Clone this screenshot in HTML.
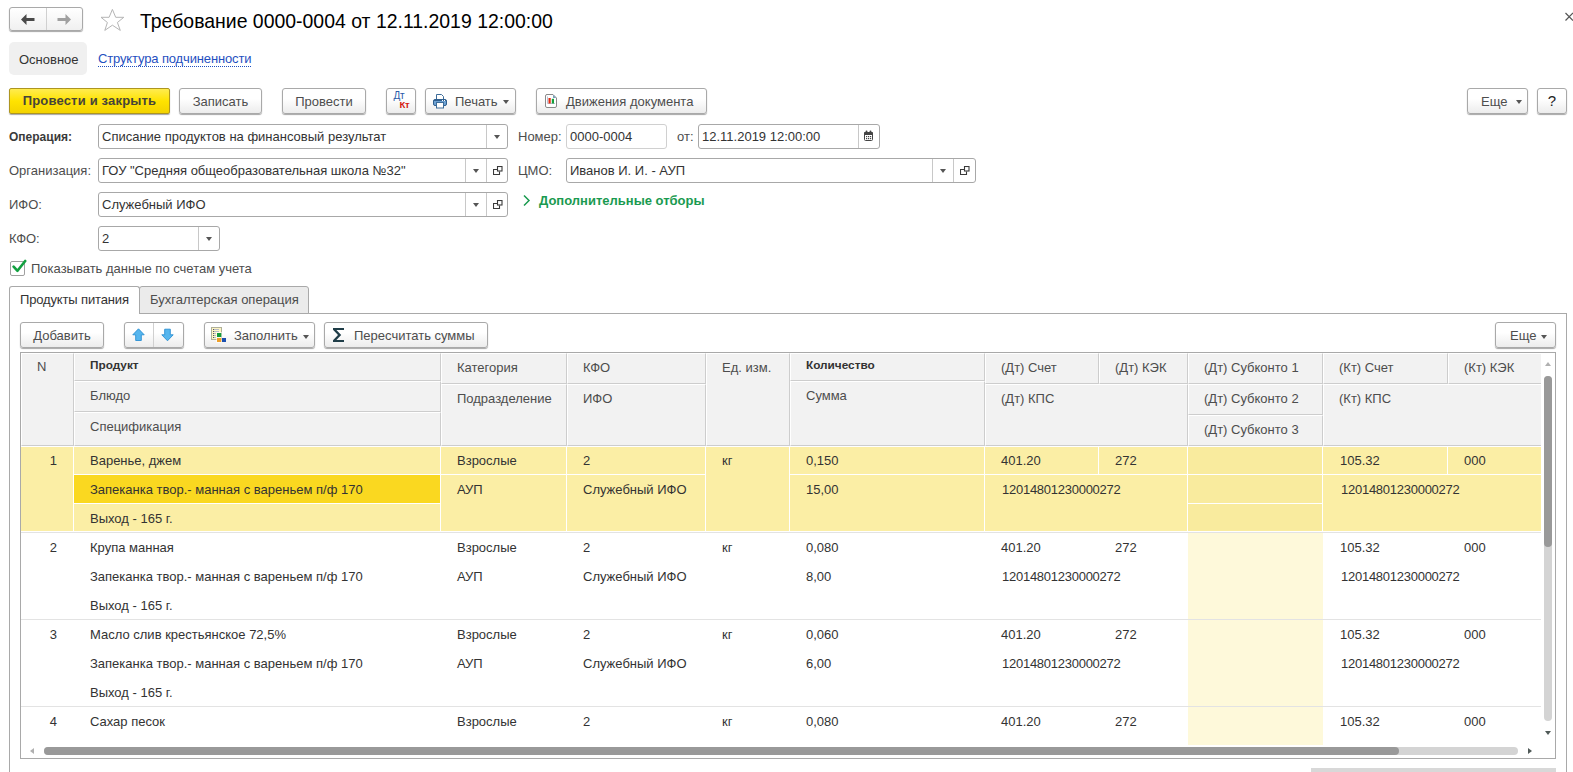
<!DOCTYPE html>
<html><head><meta charset="utf-8">
<style>
*{box-sizing:border-box;margin:0;padding:0}
html,body{width:1573px;height:772px;overflow:hidden;background:#fff}
body{position:relative;font-family:"Liberation Sans",sans-serif;font-size:13px;color:#4d4d4d}
.a{position:absolute;white-space:nowrap}
.btn{position:absolute;height:26px;border:1px solid #a9a9a9;border-radius:3px;background:linear-gradient(#fff,#fff 40%,#ececec);box-shadow:0 1px 1px rgba(0,0,0,.35);color:#4d4d4d;line-height:25px;text-align:center;white-space:nowrap}
.fld{position:absolute;height:25px;border:1px solid #a8a8a8;border-radius:3px;background:#fff;color:#333;line-height:23px;padding-left:3px;white-space:nowrap;overflow:hidden}
.lbl{position:absolute;white-space:nowrap;color:#4d4d4d;line-height:15px}
.dd{position:absolute;width:0;height:0;border-left:3.5px solid transparent;border-right:3.5px solid transparent;border-top:4px solid #555}
.op{position:absolute;width:11px;height:11px}
.op::before{content:"";position:absolute;left:0;top:3px;width:8px;height:8px;border:1px solid #555;box-sizing:border-box}
.op::after{content:"";position:absolute;left:3px;top:0;width:8px;height:8px;border:1px solid #555;background:#fff;box-sizing:border-box}
</style></head><body>
<!-- nav -->
<div class="a" style="left:9px;top:7px;width:74px;height:24px;border:1px solid #a9a9a9;border-radius:3px;background:linear-gradient(#fff,#f0f0f0);box-shadow:0 1px 1px rgba(0,0,0,.35)"></div>
<div class="a" style="left:46px;top:8px;width:1px;height:22px;background:#d0d0d0"></div>
<svg class="a" style="left:20px;top:13px" width="16" height="12" viewBox="0 0 16 12"><path d="M1 6.5 L6.5 1 L6.5 5 L14.5 5 L14.5 8 L6.5 8 L6.5 12 Z" fill="#4a4a4a"/></svg>
<svg class="a" style="left:56px;top:13px" width="16" height="12" viewBox="0 0 16 12"><path d="M15 6.5 L9.5 1 L9.5 5 L1.5 5 L1.5 8 L9.5 8 L9.5 12 Z" fill="#a0a0a0"/></svg>
<svg class="a" style="left:100px;top:8px" width="26" height="24" viewBox="0 0 26 24"><path d="M12.4 1.4 L15.7 9.3 L23.8 9.3 L17.4 14.5 L20.3 22.4 L12.4 17.2 L4.8 22.4 L7.4 14.5 L1 9.3 L9.1 9.3 Z" fill="none" stroke="#b5b5b5" stroke-width="1"/></svg>
<div class="a" style="left:140px;top:9px;font-size:19.45px;color:#000;line-height:24px">Требование 0000-0004 от 12.11.2019 12:00:00</div>
<svg class="a" style="left:1560px;top:8px" width="13" height="18" viewBox="0 0 13 18"><path d="M5.5 5 L13 12.5 M13 5 L5.5 12.5" stroke="#555" stroke-width="1.2"/></svg>

<!-- tabs top -->
<div class="a" style="left:9px;top:42px;width:78px;height:33px;background:#f0f0f0;border-radius:5px"></div>
<div class="lbl" style="left:19px;top:52px;color:#333">Основное</div>
<div class="lbl" style="left:98px;top:52px;color:#1f4fc0;border-bottom:1px dotted #1f4fc0;line-height:14px;letter-spacing:-0.14px">Структура подчиненности</div>
<!-- command bar -->
<div class="btn" style="left:9px;top:88px;width:161px;border-color:#ad9520;border-radius:2px;background:linear-gradient(#ffec50,#ffe300 50%,#f3d300);font-weight:bold;color:#46443a;letter-spacing:0.18px;line-height:24px">Провести и закрыть</div>
<div class="btn" style="left:179px;top:88px;width:83px">Записать</div>
<div class="btn" style="left:282px;top:88px;width:84px">Провести</div>
<div class="btn" style="left:386px;top:88px;width:30px"></div>
<div class="a" style="left:393.5px;top:91px;font-size:10px;color:#2c5aa8;line-height:10px;letter-spacing:-0.2px">Дт</div>
<div class="a" style="left:399.5px;top:100px;font-size:9.5px;font-weight:bold;color:#d41a10;line-height:10px;letter-spacing:-0.3px">Кт</div>
<div class="btn" style="left:425px;top:88px;width:91px;text-align:left;padding-left:29px">Печать</div>
<svg class="a" style="left:433px;top:94px" width="14" height="15" viewBox="0 0 14 15"><path d="M3.5 0.5 H8.5 L10.5 2.5 V5.5 H3.5 Z" fill="#fff" stroke="#3d6c99"/><rect x="0.5" y="5.5" width="13" height="6" rx="1.5" fill="#6ea2d3" stroke="#2f5f8f"/><path d="M1 6.5 H13" stroke="#2f5f8f"/><rect x="9" y="6" width="1" height="1" fill="#fff"/><rect x="11" y="6" width="1" height="1" fill="#fff"/><rect x="3.5" y="8.5" width="7" height="5.5" fill="#fff" stroke="#3d6c99"/></svg>
<div class="a" style="left:503px;top:100px;width:0;height:0;border-left:3.5px solid transparent;border-right:3.5px solid transparent;border-top:4px solid #555"></div>
<div class="btn" style="left:536px;top:88px;width:171px;text-align:left;padding-left:29px">Движения документа</div>
<svg class="a" style="left:545px;top:94px" width="13" height="14" viewBox="0 0 13 14"><path d="M1.5 0.5 H8 L11.5 4 V12 Q11.5 13.5 10 13.5 H2 Q0.5 13.5 0.5 12 V2 Q0.5 0.5 2 0.5" fill="#fff" stroke="#8a8a8a"/><path d="M8 0.8 L11.2 4 L8 4 Z" fill="#7aa0b8"/><path d="M2.5 2.5 V9.5 H10" fill="none" stroke="#a8b4c8" stroke-width="0.8"/><rect x="3.5" y="4" width="2.2" height="5.5" fill="#e42a12"/><rect x="6.8" y="4.8" width="2.2" height="4.7" fill="#12a03a"/></svg>
<div class="btn" style="left:1467px;top:88px;width:61px;text-align:left;padding-left:13px">Еще</div>
<div class="a" style="left:1516px;top:100px;width:0;height:0;border-left:3.5px solid transparent;border-right:3.5px solid transparent;border-top:4px solid #555"></div>
<div class="btn" style="left:1537px;top:88px;width:30px;color:#222;font-size:15px;line-height:23px">?</div>

<!-- form -->
<div class="lbl" style="left:9px;top:130px;font-weight:bold;font-size:12px;color:#3a3a3a">Операция:</div>
<div class="fld" style="left:98px;top:124px;width:410px">Списание продуктов на финансовый результат</div>
<div class="a" style="left:486px;top:125px;width:1px;height:23px;background:#c8c8c8"></div>
<div class="dd" style="left:494px;top:135px"></div>
<div class="lbl" style="left:518px;top:129px">Номер:</div>
<div class="fld" style="left:566px;top:124px;width:101px;border-color:#d0d0d0">0000-0004</div>
<div class="lbl" style="left:677px;top:129px">от:</div>
<div class="fld" style="left:698px;top:124px;width:182px">12.11.2019 12:00:00</div>
<div class="a" style="left:858px;top:125px;width:1px;height:23px;background:#c8c8c8"></div>
<svg class="a" style="left:864px;top:130px" width="9" height="11" viewBox="0 0 9 11"><rect x="0.5" y="2.5" width="8" height="8" rx="1" fill="#fff" stroke="#444"/><rect x="0" y="2" width="9" height="3" rx="1" fill="#444"/><circle cx="2.5" cy="1.5" r="1" fill="#444"/><circle cx="6.5" cy="1.5" r="1" fill="#444"/><g fill="#444"><rect x="2" y="6" width="1.2" height="1.2"/><rect x="4" y="6" width="1.2" height="1.2"/><rect x="6" y="6" width="1.2" height="1.2"/><rect x="2" y="8" width="1.2" height="1.2"/><rect x="4" y="8" width="1.2" height="1.2"/><rect x="6" y="8" width="1.2" height="1.2"/></g></svg>

<div class="lbl" style="left:9px;top:163px">Организация:</div>
<div class="fld" style="left:98px;top:158px;width:410px">ГОУ "Средняя общеобразовательная школа №32"</div>
<div class="a" style="left:465px;top:159px;width:1px;height:23px;background:#c8c8c8"></div>
<div class="a" style="left:486px;top:159px;width:1px;height:23px;background:#c8c8c8"></div>
<div class="dd" style="left:473px;top:169px"></div>
<svg class="a" style="left:493px;top:166px" width="10" height="10" viewBox="0 0 10 10"><path d="M4 3.5 H0.5 V8.5 H6.5 V5.5" fill="none" stroke="#3a3a3a" stroke-width="1.1"/><rect x="4.5" y="0.5" width="4.5" height="4.5" fill="none" stroke="#3a3a3a" stroke-width="1.1"/></svg>
<div class="lbl" style="left:518px;top:163px">ЦМО:</div>
<div class="fld" style="left:566px;top:158px;width:410px">Иванов И. И. - АУП</div>
<div class="a" style="left:932px;top:159px;width:1px;height:23px;background:#c8c8c8"></div>
<div class="a" style="left:953px;top:159px;width:1px;height:23px;background:#c8c8c8"></div>
<div class="dd" style="left:940px;top:169px"></div>
<svg class="a" style="left:960px;top:166px" width="10" height="10" viewBox="0 0 10 10"><path d="M4 3.5 H0.5 V8.5 H6.5 V5.5" fill="none" stroke="#3a3a3a" stroke-width="1.1"/><rect x="4.5" y="0.5" width="4.5" height="4.5" fill="none" stroke="#3a3a3a" stroke-width="1.1"/></svg>

<div class="lbl" style="left:9px;top:197px">ИФО:</div>
<div class="fld" style="left:98px;top:192px;width:410px">Служебный ИФО</div>
<div class="a" style="left:465px;top:193px;width:1px;height:23px;background:#c8c8c8"></div>
<div class="a" style="left:486px;top:193px;width:1px;height:23px;background:#c8c8c8"></div>
<div class="dd" style="left:473px;top:203px"></div>
<svg class="a" style="left:493px;top:200px" width="10" height="10" viewBox="0 0 10 10"><path d="M4 3.5 H0.5 V8.5 H6.5 V5.5" fill="none" stroke="#3a3a3a" stroke-width="1.1"/><rect x="4.5" y="0.5" width="4.5" height="4.5" fill="none" stroke="#3a3a3a" stroke-width="1.1"/></svg>
<svg class="a" style="left:522px;top:194px" width="9" height="13" viewBox="0 0 9 13"><path d="M2 1.5 L7 6.5 L2 11.5" fill="none" stroke="#1a9a50" stroke-width="1.5"/></svg>
<div class="lbl" style="left:539px;top:193px;font-weight:bold;color:#1a9a50">Дополнительные отборы</div>

<div class="lbl" style="left:9px;top:231px">КФО:</div>
<div class="fld" style="left:98px;top:226px;width:122px">2</div>
<div class="a" style="left:198px;top:227px;width:1px;height:23px;background:#c8c8c8"></div>
<div class="dd" style="left:206px;top:237px"></div>

<div class="a" style="left:10px;top:261px;width:15px;height:15px;border:1px solid #a0a0a0;border-radius:2px;background:#fff"></div>
<svg class="a" style="left:12px;top:258px" width="16" height="16" viewBox="0 0 16 16"><path d="M1.6 8.6 L5.5 12.8 L13.2 3" fill="none" stroke="#12a040" stroke-width="2.6" stroke-linecap="round" stroke-linejoin="round"/></svg>
<div class="lbl" style="left:31px;top:261px">Показывать данные по счетам учета</div>
<!-- tabs -->
<div class="a" style="left:9px;top:313px;width:1558px;height:470px;border:1px solid #a9a9a9;background:#fff"></div>
<div class="a" style="left:139px;top:286px;width:170px;height:28px;border:1px solid #a9a9a9;border-radius:3px 3px 0 0;background:#ebebeb"></div>
<div class="a" style="left:9px;top:286px;width:131px;height:28px;border:1px solid #a9a9a9;border-bottom:none;border-radius:3px 3px 0 0;background:#fff"></div>
<div class="a" style="left:10px;top:313px;width:129px;height:1px;background:#fff"></div>
<div class="a" style="left:20px;top:291.5px;line-height:15px;color:#333;letter-spacing:-0.15px">Продукты питания</div>
<div class="a" style="left:150px;top:291.5px;line-height:15px;color:#4d4d4d">Бухгалтерская операция</div>
<div class="btn" style="left:20px;top:322px;width:84px;">Добавить</div>
<div class="btn" style="left:124px;top:322px;width:60px;"></div>
<div class="a" style="left:153px;top:323px;width:1px;height:24px;background:#d0d0d0"></div>
<svg class="a" style="left:132px;top:328px" width="14" height="14" viewBox="0 0 14 14"><path d="M6.5 0.8 L12.2 6.8 L9.3 6.8 L9.3 12.5 L3.7 12.5 L3.7 6.8 L0.8 6.8 Z" fill="#56b6ee" stroke="#2a8ed2" stroke-width="0.9"/></svg>
<svg class="a" style="left:161px;top:328px" width="14" height="14" viewBox="0 0 14 14"><path d="M6.5 12.8 L12.2 6.8 L9.3 6.8 L9.3 1.2 L3.7 1.2 L3.7 6.8 L0.8 6.8 Z" fill="#56b6ee" stroke="#2a8ed2" stroke-width="0.9"/></svg>
<div class="btn" style="left:204px;top:322px;width:111px;text-align:left;padding-left:29px">Заполнить</div>
<svg class="a" style="left:211px;top:327px" width="16" height="16" viewBox="0 0 16 16"><rect x="0.5" y="0.5" width="10" height="12" fill="#fdf5c4" stroke="#b0b098"/><g fill="#5a5a5a"><rect x="2" y="2" width="1" height="1"/><rect x="2" y="4" width="1" height="1"/><rect x="2" y="6" width="1" height="1"/><rect x="2" y="8" width="1" height="1"/><rect x="2" y="10" width="1" height="1"/></g><path d="M3 2.5 H8 M3 4.5 H8 M3 6.5 H5 M3 8.5 H5 M3 10.5 H5" stroke="#b8bcc8" stroke-width="1"/><rect x="5" y="5" width="6" height="11" fill="#fff" opacity="0.6"/><rect x="6" y="6" width="4.3" height="4" fill="#159a3a"/><rect x="6" y="11" width="4.3" height="4" fill="#eea02a"/><rect x="11" y="11" width="4" height="4" fill="#1a4fb0"/></svg>
<div class="dd" style="left:303px;top:335px"></div>
<div class="btn" style="left:324px;top:322px;width:164px;text-align:left;padding-left:29px">Пересчитать суммы</div>
<svg class="a" style="left:333px;top:328px" width="11" height="14" viewBox="0 0 11 14"><path d="M0 0 H11 V2 H3.4 L8.2 7 L3.4 12 H11 V14 H0 V12.2 L5 7 L0 1.8 Z" fill="#1f3d48"/></svg>
<div class="btn" style="left:1495px;top:322px;width:61px;text-align:left;padding-left:14px">Еще</div>
<div class="dd" style="left:1541px;top:335px"></div>
<!-- table -->
<div class="a" style="left:20px;top:352px;width:1536px;height:407px;border:1px solid #a9a9a9;background:#fff;overflow:hidden"></div>
<div class="a" style="left:21px;top:353px;width:53px;height:93px;background:#f2f2f2;border-left:1px solid #fff;border-top:1px solid #fff;border-right:1px solid #cdcdcd;border-bottom:1px solid #cdcdcd"></div>
<div class="a" style="left:37px;top:359px;line-height:15px;color:#4d4d4d">N</div>
<div class="a" style="left:74px;top:353px;width:367px;height:28px;background:#f2f2f2;border-left:1px solid #fff;border-top:1px solid #fff;border-right:1px solid #cdcdcd;border-bottom:1px solid #cdcdcd"></div>
<div class="a" style="left:90px;top:358px;line-height:15px;color:#4d4d4d;font-weight:bold;font-size:11.8px;color:#333">Продукт</div>
<div class="a" style="left:74px;top:381px;width:367px;height:31px;background:#f2f2f2;border-left:1px solid #fff;border-top:1px solid #fff;border-right:1px solid #cdcdcd;border-bottom:1px solid #cdcdcd"></div>
<div class="a" style="left:90px;top:388px;line-height:15px;color:#4d4d4d">Блюдо</div>
<div class="a" style="left:74px;top:412px;width:367px;height:34px;background:#f2f2f2;border-left:1px solid #fff;border-top:1px solid #fff;border-right:1px solid #cdcdcd;border-bottom:1px solid #cdcdcd"></div>
<div class="a" style="left:90px;top:419px;line-height:15px;color:#4d4d4d">Спецификация</div>
<div class="a" style="left:441px;top:353px;width:126px;height:31px;background:#f2f2f2;border-left:1px solid #fff;border-top:1px solid #fff;border-right:1px solid #cdcdcd;border-bottom:1px solid #cdcdcd"></div>
<div class="a" style="left:457px;top:360px;line-height:15px;color:#4d4d4d">Категория</div>
<div class="a" style="left:441px;top:384px;width:126px;height:62px;background:#f2f2f2;border-left:1px solid #fff;border-top:1px solid #fff;border-right:1px solid #cdcdcd;border-bottom:1px solid #cdcdcd"></div>
<div class="a" style="left:457px;top:391px;line-height:15px;color:#4d4d4d">Подразделение</div>
<div class="a" style="left:567px;top:353px;width:139px;height:31px;background:#f2f2f2;border-left:1px solid #fff;border-top:1px solid #fff;border-right:1px solid #cdcdcd;border-bottom:1px solid #cdcdcd"></div>
<div class="a" style="left:583px;top:360px;line-height:15px;color:#4d4d4d">КФО</div>
<div class="a" style="left:567px;top:384px;width:139px;height:62px;background:#f2f2f2;border-left:1px solid #fff;border-top:1px solid #fff;border-right:1px solid #cdcdcd;border-bottom:1px solid #cdcdcd"></div>
<div class="a" style="left:583px;top:391px;line-height:15px;color:#4d4d4d">ИФО</div>
<div class="a" style="left:706px;top:353px;width:84px;height:93px;background:#f2f2f2;border-left:1px solid #fff;border-top:1px solid #fff;border-right:1px solid #cdcdcd;border-bottom:1px solid #cdcdcd"></div>
<div class="a" style="left:722px;top:360px;line-height:15px;color:#4d4d4d">Ед. изм.</div>
<div class="a" style="left:790px;top:353px;width:195px;height:28px;background:#f2f2f2;border-left:1px solid #fff;border-top:1px solid #fff;border-right:1px solid #cdcdcd;border-bottom:1px solid #cdcdcd"></div>
<div class="a" style="left:806px;top:358px;line-height:15px;color:#4d4d4d;font-weight:bold;font-size:11.8px;color:#333">Количество</div>
<div class="a" style="left:790px;top:381px;width:195px;height:65px;background:#f2f2f2;border-left:1px solid #fff;border-top:1px solid #fff;border-right:1px solid #cdcdcd;border-bottom:1px solid #cdcdcd"></div>
<div class="a" style="left:806px;top:388px;line-height:15px;color:#4d4d4d">Сумма</div>
<div class="a" style="left:985px;top:353px;width:114px;height:31px;background:#f2f2f2;border-left:1px solid #fff;border-top:1px solid #fff;border-right:1px solid #cdcdcd;border-bottom:1px solid #cdcdcd"></div>
<div class="a" style="left:1001px;top:360px;line-height:15px;color:#4d4d4d">(Дт) Счет</div>
<div class="a" style="left:1099px;top:353px;width:89px;height:31px;background:#f2f2f2;border-left:1px solid #fff;border-top:1px solid #fff;border-right:1px solid #cdcdcd;border-bottom:1px solid #cdcdcd"></div>
<div class="a" style="left:1115px;top:360px;line-height:15px;color:#4d4d4d">(Дт) КЭК</div>
<div class="a" style="left:985px;top:384px;width:203px;height:62px;background:#f2f2f2;border-left:1px solid #fff;border-top:1px solid #fff;border-right:1px solid #cdcdcd;border-bottom:1px solid #cdcdcd"></div>
<div class="a" style="left:1001px;top:391px;line-height:15px;color:#4d4d4d">(Дт) КПС</div>
<div class="a" style="left:1188px;top:353px;width:135px;height:31px;background:#f2f2f2;border-left:1px solid #fff;border-top:1px solid #fff;border-right:1px solid #cdcdcd;border-bottom:1px solid #cdcdcd"></div>
<div class="a" style="left:1204px;top:360px;line-height:15px;color:#4d4d4d">(Дт) Субконто 1</div>
<div class="a" style="left:1188px;top:384px;width:135px;height:31px;background:#f2f2f2;border-left:1px solid #fff;border-top:1px solid #fff;border-right:1px solid #cdcdcd;border-bottom:1px solid #cdcdcd"></div>
<div class="a" style="left:1204px;top:391px;line-height:15px;color:#4d4d4d">(Дт) Субконто 2</div>
<div class="a" style="left:1188px;top:415px;width:135px;height:31px;background:#f2f2f2;border-left:1px solid #fff;border-top:1px solid #fff;border-right:1px solid #cdcdcd;border-bottom:1px solid #cdcdcd"></div>
<div class="a" style="left:1204px;top:422px;line-height:15px;color:#4d4d4d">(Дт) Субконто 3</div>
<div class="a" style="left:1323px;top:353px;width:125px;height:31px;background:#f2f2f2;border-left:1px solid #fff;border-top:1px solid #fff;border-right:1px solid #cdcdcd;border-bottom:1px solid #cdcdcd"></div>
<div class="a" style="left:1339px;top:360px;line-height:15px;color:#4d4d4d">(Кт) Счет</div>
<div class="a" style="left:1448px;top:353px;width:98px;height:31px;background:#f2f2f2;border-left:1px solid #fff;border-top:1px solid #fff;border-right:1px solid #cdcdcd;border-bottom:1px solid #cdcdcd"></div>
<div class="a" style="left:1464px;top:360px;line-height:15px;color:#4d4d4d">(Кт) КЭК</div>
<div class="a" style="left:1323px;top:384px;width:223px;height:62px;background:#f2f2f2;border-left:1px solid #fff;border-top:1px solid #fff;border-right:1px solid #cdcdcd;border-bottom:1px solid #cdcdcd"></div>
<div class="a" style="left:1339px;top:391px;line-height:15px;color:#4d4d4d">(Кт) КПС</div>
<div class="a" style="left:21px;top:446px;width:1520px;height:86px;background:#fff"></div>
<div class="a" style="left:21px;top:447px;width:52px;height:84px;background:#fbeea5"></div>
<div class="a" style="left:74px;top:447px;width:366px;height:27px;background:#fbeea5"></div>
<div class="a" style="left:74px;top:475px;width:366px;height:28px;background:#fad820"></div>
<div class="a" style="left:74px;top:504px;width:366px;height:27px;background:#fbeea5"></div>
<div class="a" style="left:441px;top:447px;width:125px;height:27px;background:#fbeea5"></div>
<div class="a" style="left:441px;top:475px;width:125px;height:56px;background:#fbeea5"></div>
<div class="a" style="left:567px;top:447px;width:138px;height:27px;background:#fbeea5"></div>
<div class="a" style="left:567px;top:475px;width:138px;height:56px;background:#fbeea5"></div>
<div class="a" style="left:790px;top:447px;width:194px;height:27px;background:#fbeea5"></div>
<div class="a" style="left:790px;top:475px;width:194px;height:56px;background:#fbeea5"></div>
<div class="a" style="left:706px;top:447px;width:83px;height:84px;background:#fbeea5"></div>
<div class="a" style="left:985px;top:447px;width:113px;height:27px;background:#fbeea5"></div>
<div class="a" style="left:1099px;top:447px;width:88px;height:27px;background:#fbeea5"></div>
<div class="a" style="left:985px;top:475px;width:202px;height:56px;background:#fbeea5"></div>
<div class="a" style="left:1188px;top:447px;width:134px;height:27px;background:#f9eb9e"></div>
<div class="a" style="left:1188px;top:475px;width:134px;height:28px;background:#f9eb9e"></div>
<div class="a" style="left:1188px;top:504px;width:134px;height:27px;background:#f9eb9e"></div>
<div class="a" style="left:1323px;top:447px;width:124px;height:27px;background:#fbeea5"></div>
<div class="a" style="left:1448px;top:447px;width:93px;height:27px;background:#fbeea5"></div>
<div class="a" style="left:1323px;top:475px;width:218px;height:56px;background:#fbeea5"></div>
<div class="a" style="left:21px;top:532px;width:1520px;height:1px;background:#e3e3e3"></div>
<div class="a" style="left:41px;top:453px;line-height:15px;color:#333;width:16px;text-align:right">1</div>
<div class="a" style="left:90px;top:453px;line-height:15px;color:#333">Варенье, джем</div>
<div class="a" style="left:457px;top:453px;line-height:15px;color:#333">Взрослые</div>
<div class="a" style="left:583px;top:453px;line-height:15px;color:#333">2</div>
<div class="a" style="left:722px;top:453px;line-height:15px;color:#333">кг</div>
<div class="a" style="left:806px;top:453px;line-height:15px;color:#333">0,150</div>
<div class="a" style="left:1001px;top:453px;line-height:15px;color:#333">401.20</div>
<div class="a" style="left:1115px;top:453px;line-height:15px;color:#333">272</div>
<div class="a" style="left:1340px;top:453px;line-height:15px;color:#333">105.32</div>
<div class="a" style="left:1464px;top:453px;line-height:15px;color:#333">000</div>
<div class="a" style="left:90px;top:482px;line-height:15px;color:#333">Запеканка твор.- манная с вареньем п/ф 170</div>
<div class="a" style="left:457px;top:482px;line-height:15px;color:#333">АУП</div>
<div class="a" style="left:583px;top:482px;line-height:15px;color:#333">Служебный ИФО</div>
<div class="a" style="left:806px;top:482px;line-height:15px;color:#333">15,00</div>
<div class="a" style="left:1002px;top:482px;line-height:15px;color:#333;letter-spacing:-0.26px">12014801230000272</div>
<div class="a" style="left:1341px;top:482px;line-height:15px;color:#333;letter-spacing:-0.26px">12014801230000272</div>
<div class="a" style="left:90px;top:511px;line-height:15px;color:#333">Выход - 165 г.</div>
<div class="a" style="left:1188px;top:533px;width:135px;height:86px;background:#fef9da"></div>
<div class="a" style="left:21px;top:619px;width:1520px;height:1px;background:#e3e3e3"></div>
<div class="a" style="left:41px;top:540px;line-height:15px;color:#333;width:16px;text-align:right">2</div>
<div class="a" style="left:90px;top:540px;line-height:15px;color:#333">Крупа манная</div>
<div class="a" style="left:457px;top:540px;line-height:15px;color:#333">Взрослые</div>
<div class="a" style="left:583px;top:540px;line-height:15px;color:#333">2</div>
<div class="a" style="left:722px;top:540px;line-height:15px;color:#333">кг</div>
<div class="a" style="left:806px;top:540px;line-height:15px;color:#333">0,080</div>
<div class="a" style="left:1001px;top:540px;line-height:15px;color:#333">401.20</div>
<div class="a" style="left:1115px;top:540px;line-height:15px;color:#333">272</div>
<div class="a" style="left:1340px;top:540px;line-height:15px;color:#333">105.32</div>
<div class="a" style="left:1464px;top:540px;line-height:15px;color:#333">000</div>
<div class="a" style="left:90px;top:569px;line-height:15px;color:#333">Запеканка твор.- манная с вареньем п/ф 170</div>
<div class="a" style="left:457px;top:569px;line-height:15px;color:#333">АУП</div>
<div class="a" style="left:583px;top:569px;line-height:15px;color:#333">Служебный ИФО</div>
<div class="a" style="left:806px;top:569px;line-height:15px;color:#333">8,00</div>
<div class="a" style="left:1002px;top:569px;line-height:15px;color:#333;letter-spacing:-0.26px">12014801230000272</div>
<div class="a" style="left:1341px;top:569px;line-height:15px;color:#333;letter-spacing:-0.26px">12014801230000272</div>
<div class="a" style="left:90px;top:598px;line-height:15px;color:#333">Выход - 165 г.</div>
<div class="a" style="left:1188px;top:620px;width:135px;height:86px;background:#fef9da"></div>
<div class="a" style="left:21px;top:706px;width:1520px;height:1px;background:#e3e3e3"></div>
<div class="a" style="left:41px;top:627px;line-height:15px;color:#333;width:16px;text-align:right">3</div>
<div class="a" style="left:90px;top:627px;line-height:15px;color:#333">Масло слив крестьянское 72,5%</div>
<div class="a" style="left:457px;top:627px;line-height:15px;color:#333">Взрослые</div>
<div class="a" style="left:583px;top:627px;line-height:15px;color:#333">2</div>
<div class="a" style="left:722px;top:627px;line-height:15px;color:#333">кг</div>
<div class="a" style="left:806px;top:627px;line-height:15px;color:#333">0,060</div>
<div class="a" style="left:1001px;top:627px;line-height:15px;color:#333">401.20</div>
<div class="a" style="left:1115px;top:627px;line-height:15px;color:#333">272</div>
<div class="a" style="left:1340px;top:627px;line-height:15px;color:#333">105.32</div>
<div class="a" style="left:1464px;top:627px;line-height:15px;color:#333">000</div>
<div class="a" style="left:90px;top:656px;line-height:15px;color:#333">Запеканка твор.- манная с вареньем п/ф 170</div>
<div class="a" style="left:457px;top:656px;line-height:15px;color:#333">АУП</div>
<div class="a" style="left:583px;top:656px;line-height:15px;color:#333">Служебный ИФО</div>
<div class="a" style="left:806px;top:656px;line-height:15px;color:#333">6,00</div>
<div class="a" style="left:1002px;top:656px;line-height:15px;color:#333;letter-spacing:-0.26px">12014801230000272</div>
<div class="a" style="left:1341px;top:656px;line-height:15px;color:#333;letter-spacing:-0.26px">12014801230000272</div>
<div class="a" style="left:90px;top:685px;line-height:15px;color:#333">Выход - 165 г.</div>
<div class="a" style="left:1188px;top:707px;width:135px;height:38px;background:#fef9da"></div>
<div class="a" style="left:41px;top:714px;line-height:15px;color:#333;width:16px;text-align:right">4</div>
<div class="a" style="left:90px;top:714px;line-height:15px;color:#333">Сахар песок</div>
<div class="a" style="left:457px;top:714px;line-height:15px;color:#333">Взрослые</div>
<div class="a" style="left:583px;top:714px;line-height:15px;color:#333">2</div>
<div class="a" style="left:722px;top:714px;line-height:15px;color:#333">кг</div>
<div class="a" style="left:806px;top:714px;line-height:15px;color:#333">0,080</div>
<div class="a" style="left:1001px;top:714px;line-height:15px;color:#333">401.20</div>
<div class="a" style="left:1115px;top:714px;line-height:15px;color:#333">272</div>
<div class="a" style="left:1340px;top:714px;line-height:15px;color:#333">105.32</div>
<div class="a" style="left:1464px;top:714px;line-height:15px;color:#333">000</div>
<div class="a" style="left:1541px;top:353px;width:14px;height:392px;background:#fff"></div>
<div class="a" style="left:1544px;top:376px;width:8px;height:345px;border-radius:4px;background:#d4d4d4"></div>
<div class="a" style="left:1544px;top:376px;width:8px;height:171px;border-radius:4px;background:#999"></div>
<div class="a" style="left:1545px;top:362px;width:0;height:0;border-left:3.5px solid transparent;border-right:3.5px solid transparent;border-bottom:4px solid #b0b0b0"></div>
<div class="a" style="left:1545px;top:731px;width:0;height:0;border-left:3.5px solid transparent;border-right:3.5px solid transparent;border-top:4px solid #505a58"></div>
<div class="a" style="left:21px;top:745px;width:1534px;height:13px;background:#fff"></div>
<div class="a" style="left:44px;top:747px;width:1474px;height:8px;border-radius:4px;background:#d4d4d4"></div>
<div class="a" style="left:44px;top:747px;width:1355px;height:8px;border-radius:4px;background:#999"></div>
<div class="a" style="left:30px;top:748px;width:0;height:0;border-top:3.5px solid transparent;border-bottom:3.5px solid transparent;border-right:4px solid #b0b0b0"></div>
<div class="a" style="left:1528px;top:747.5px;width:0;height:0;border-top:3.5px solid transparent;border-bottom:3.5px solid transparent;border-left:4px solid #505a58"></div>
<div class="a" style="left:1311px;top:768px;width:245px;height:4px;background:#d8d8d8"></div>
</body></html>
